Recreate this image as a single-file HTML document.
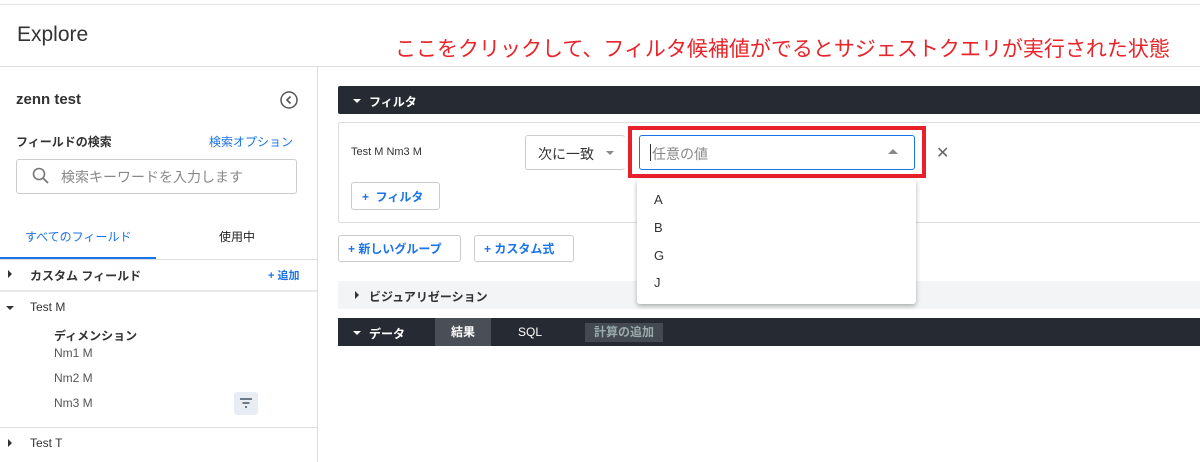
<!DOCTYPE html>
<html><head><meta charset="utf-8"><style>
*{box-sizing:border-box;margin:0;padding:0}
body{width:1200px;height:462px;overflow:hidden;background:#fff;font-family:"Liberation Sans","Noto Sans CJK JP",sans-serif;color:#333;position:relative}
.a{position:absolute}
.btn{position:absolute;border:1px solid #ccc;border-radius:3px;color:#1a73e8;font-size:12px;font-weight:bold;display:flex;align-items:center;padding-left:10px}
.tri{position:absolute;width:0;height:0;border-left:4px solid transparent;border-right:4px solid transparent;border-top:4px solid currentColor}
.trr{position:absolute;width:0;height:0;border-top:4px solid transparent;border-bottom:4px solid transparent;border-left:4px solid currentColor}
</style></head><body>
<div class="a" style="left:0;top:4px;width:1200px;height:1px;background:#e5e5e5"></div>
<div class="a" style="left:17px;top:23px;font-size:21px;color:#333">Explore</div>
<div class="a" style="left:395px;top:33px;font-size:21px;color:#e8242a;white-space:nowrap">ここをクリックして、フィルタ候補値がでるとサジェストクエリが実行された状態</div>
<div class="a" style="left:0;top:66px;width:1200px;height:1px;background:#ddd"></div>
<div class="a" style="left:317px;top:66px;width:1px;height:396px;background:#ddd"></div>
<!-- sidebar -->
<div class="a" style="left:16px;top:91px;font-size:15px;font-weight:bold;color:#333">zenn test</div>
<svg class="a" style="left:279px;top:90px" width="20" height="20"><circle cx="10" cy="10" r="8" fill="none" stroke="#555" stroke-width="1.5"/><path d="M11.5 6.5L8 10l3.5 3.5" fill="none" stroke="#555" stroke-width="1.6"/></svg>
<div class="a" style="left:16px;top:133px;font-size:12px;font-weight:bold">フィールドの検索</div>
<div class="a" style="left:209px;top:133px;font-size:12px;color:#1a73e8">検索オプション</div>
<div class="a" style="left:16px;top:159px;width:281px;height:35px;border:1px solid #ccc;border-radius:3px"></div>
<svg class="a" style="left:32px;top:167px" width="18" height="18"><circle cx="7" cy="7" r="5.5" fill="none" stroke="#777" stroke-width="1.6"/><line x1="11" y1="11" x2="16" y2="16" stroke="#777" stroke-width="1.8"/></svg>
<div class="a" style="left:61px;top:167px;font-size:14px;color:#888">検索キーワードを入力します</div>
<div class="a" style="left:25px;top:228px;font-size:12px;color:#1a73e8">すべてのフィールド</div>
<div class="a" style="left:219px;top:228px;font-size:12px;color:#222">使用中</div>
<div class="a" style="left:0;top:257px;width:156px;height:2px;background:#1a73e8"></div>
<div class="a" style="left:0;top:259px;width:317px;height:1px;background:#ddd"></div>
<span class="trr" style="left:8px;top:270px;color:#333"></span>
<div class="a" style="left:30px;top:267px;font-size:12px;font-weight:bold">カスタム フィールド</div>
<div class="a" style="left:268px;top:267px;font-size:11px;color:#1a73e8;font-weight:bold">+ 追加</div>
<div class="a" style="left:0;top:290px;width:317px;height:2px;background:#e8e8e8"></div>
<span class="tri" style="left:6px;top:306px;color:#333"></span>
<div class="a" style="left:30px;top:300px;font-size:12px">Test M</div>
<div class="a" style="left:54px;top:327px;font-size:12px;font-weight:bold">ディメンション</div>
<div class="a" style="left:54px;top:346px;font-size:12px;color:#555">Nm1 M</div>
<div class="a" style="left:54px;top:371px;font-size:12px;color:#555">Nm2 M</div>
<div class="a" style="left:54px;top:396px;font-size:12px;color:#555">Nm3 M</div>
<div class="a" style="left:234px;top:392px;width:24px;height:23px;background:#e8edf3;border-radius:3px"></div>
<svg class="a" style="left:239px;top:397px" width="14" height="12"><path d="M1 2h12M3.5 6h7M6 10h2" stroke="#456" stroke-width="1.5"/></svg>
<div class="a" style="left:0;top:427px;width:317px;height:1px;background:#ddd"></div>
<span class="trr" style="left:8px;top:439px;color:#333"></span>
<div class="a" style="left:30px;top:436px;font-size:12px">Test T</div>
<!-- main -->
<div class="a" style="left:338px;top:86px;width:862px;height:28px;background:#262b33;border-radius:2px 0 0 2px"></div>
<span class="tri" style="left:353px;top:99px;color:#fff"></span>
<div class="a" style="left:369px;top:93px;color:#fff;font-size:12px;font-weight:bold">フィルタ</div>
<div class="a" style="left:338px;top:122px;width:870px;height:101px;border:1px solid #ddd;border-radius:2px"></div>
<div class="a" style="left:351px;top:146px;font-size:11px;color:#333">Test M Nm3 M</div>
<div class="a" style="left:525px;top:135px;width:100px;height:35px;border:1px solid #ccc;border-radius:3px;border-right:none"></div>
<div class="a" style="left:538px;top:144px;font-size:14px;color:#333">次に一致</div>
<span class="tri" style="left:606px;top:151px;color:#888"></span>
<div class="a" style="left:628px;top:126px;width:298px;height:52px;border:4px solid #e8202a"></div>
<div class="a" style="left:639px;top:135px;width:276px;height:35px;border:1px solid #1a73e8;border-radius:3px"></div>
<div class="a" style="left:650px;top:144px;width:1px;height:17px;background:#333"></div>
<div class="a" style="left:652px;top:144px;font-size:14px;color:#888">任意の値</div>
<div class="a" style="left:888px;top:149px;width:0;height:0;border-left:5px solid transparent;border-right:5px solid transparent;border-bottom:5px solid #888"></div>
<div class="a" style="left:936px;top:143px;font-size:16px;color:#666">✕</div>
<div class="btn" style="left:351px;top:182px;width:89px;height:28px">+&nbsp;&nbsp;フィルタ</div>
<div class="btn" style="left:338px;top:235px;width:123px;height:27px;padding-left:9px">+&nbsp;新しいグループ</div>
<div class="btn" style="left:474px;top:235px;width:100px;height:27px;padding-left:9px">+&nbsp;カスタム式</div>
<div class="a" style="left:338px;top:281px;width:862px;height:28px;background:#f3f4f5"></div>
<span class="trr" style="left:355px;top:291px;color:#333"></span>
<div class="a" style="left:369px;top:288px;font-size:12px;font-weight:bold;color:#333">ビジュアリゼーション</div>
<div class="a" style="left:637px;top:179px;width:279px;height:125px;background:#fff;border-radius:3px;box-shadow:0 2px 5px rgba(0,0,0,.3)"></div>
<div class="a" style="left:654px;top:192px;font-size:13px">A</div>
<div class="a" style="left:654px;top:220px;font-size:13px">B</div>
<div class="a" style="left:654px;top:248px;font-size:13px">G</div>
<div class="a" style="left:654px;top:275px;font-size:13px">J</div>
<div class="a" style="left:338px;top:318px;width:862px;height:28px;background:#262b33"></div>
<span class="tri" style="left:353px;top:331px;color:#fff"></span>
<div class="a" style="left:369px;top:325px;color:#fff;font-size:12px;font-weight:bold">データ</div>
<div class="a" style="left:435px;top:318px;width:56px;height:28px;background:#4a4f57;color:#fff;font-size:12px;font-weight:bold;text-align:center;line-height:28px">結果</div>
<div class="a" style="left:518px;top:325px;color:#fff;font-size:12px">SQL</div>
<div class="a" style="left:585px;top:323px;width:78px;height:19px;background:#454a52;color:#9aa;font-size:12px;font-weight:bold;text-align:center;line-height:19px">計算の追加</div>
</body></html>
